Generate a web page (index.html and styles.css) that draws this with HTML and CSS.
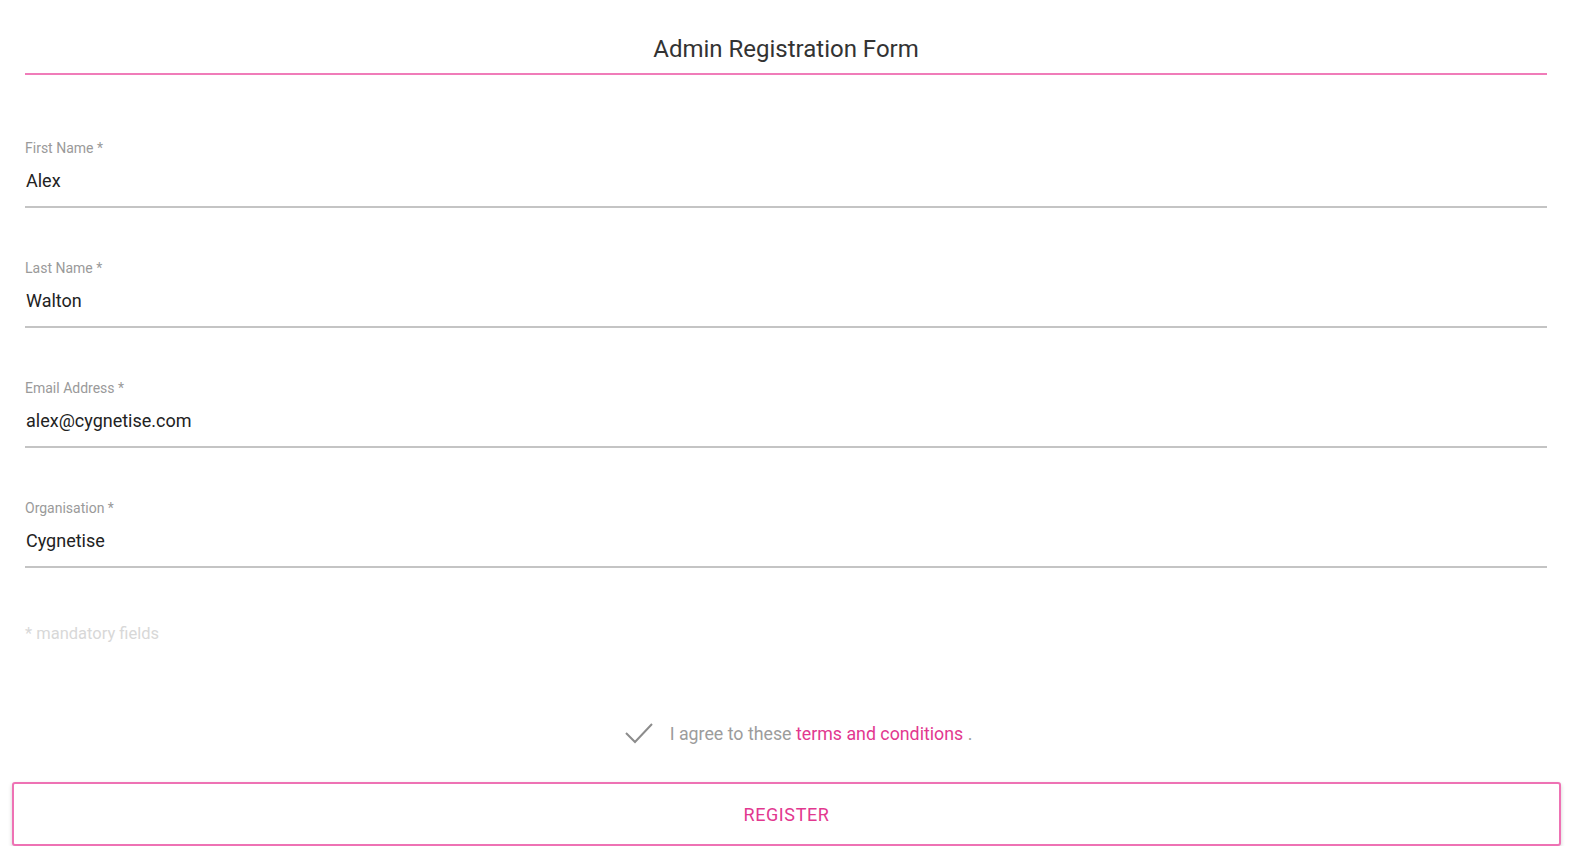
FILE: index.html
```html
<!DOCTYPE html>
<html lang="en">
<head>
<meta charset="utf-8">
<title>Admin Registration Form</title>
<link rel="stylesheet" href="styles.css">
</head>
<body>
<div class="page">
  <header class="form-header">
    <h1 class="form-title">Admin Registration Form</h1>
  </header>
  <form class="form">
    <div class="field first">
      <label class="field-label">First Name *</label>
      <div class="field-value">Alex</div>
    </div>
    <div class="field">
      <label class="field-label">Last Name *</label>
      <div class="field-value">Walton</div>
    </div>
    <div class="field">
      <label class="field-label">Email Address *</label>
      <div class="field-value">alex@cygnetise.com</div>
    </div>
    <div class="field">
      <label class="field-label">Organisation *</label>
      <div class="field-value">Cygnetise</div>
    </div>
    <p class="mandatory">* mandatory fields</p>
    <div class="agree">
      <svg class="check" width="30" height="24" viewBox="0 0 30 24"><polyline points="2,11 11,20 28,2" fill="none" stroke="#8c8c8c" stroke-width="2"/></svg>
      <span class="agree-text">I agree to these <a class="terms" href="#">terms and conditions</a> .</span>
    </div>
  </form>
  <button class="register" type="button">REGISTER</button>
</div>
</body>
</html>
```

FILE: styles.css
```css
html, body {
  margin: 0;
  padding: 0;
  background: #ffffff;
}
body {
  font-family: Roboto, "Liberation Sans", Arial, sans-serif;
}
.page {
  width: 1572px;
  box-sizing: border-box;
}
.form-header {
  margin: 0 25px;
  height: 75px;
  border-bottom: 2px solid #f07cb9;
  display: flex;
  justify-content: center;
  box-sizing: border-box;
  padding-top: 35px;
}
.form-title {
  margin: 0;
  font-size: 24px;
  font-weight: 400;
  color: #333;
  line-height: 28px;
}
.form {
  margin: 0 25px;
  display: flex;
  flex-direction: column;
}
.field {
  display: flex;
  flex-direction: column;
  margin-top: 51px;
  border-bottom: 2px solid #c4c4c4;
  padding-bottom: 13px;
}
.field.first {
  margin-top: 64px;
}
.field-label {
  font-size: 14px;
  line-height: 18px;
  color: #9a9a9a;
}
.field-value {
  margin-top: 12px;
  font-size: 18px;
  line-height: 24px;
  color: #222;
  padding-left: 1px;
}
.mandatory {
  margin: 56px 0 0;
  font-size: 16.5px;
  line-height: 20px;
  color: #d8d8d8;
}
.agree {
  margin-top: 78px;
  padding-left: 24px;
  display: flex;
  align-items: center;
  justify-content: center;
  gap: 16px;
  height: 24px;
}
.check {
  display: block;
}
.agree-text {
  font-size: 17.8px;
  line-height: 24px;
  color: #9c9c9c;
}
.terms {
  color: #e2388f;
  text-decoration: none;
}
.register {
  display: block;
  margin: 36px 12px 0;
  width: 1549px;
  height: 64px;
  background: #fff;
  border: 2px solid #ee72b4;
  border-radius: 3px;
  box-shadow: 0 2px 4px rgba(0,0,0,0.18);
  font-family: Roboto, "Liberation Sans", Arial, sans-serif;
  font-size: 18px;
  color: #e2388f;
  letter-spacing: 0.6px;
  cursor: pointer;
}
```
